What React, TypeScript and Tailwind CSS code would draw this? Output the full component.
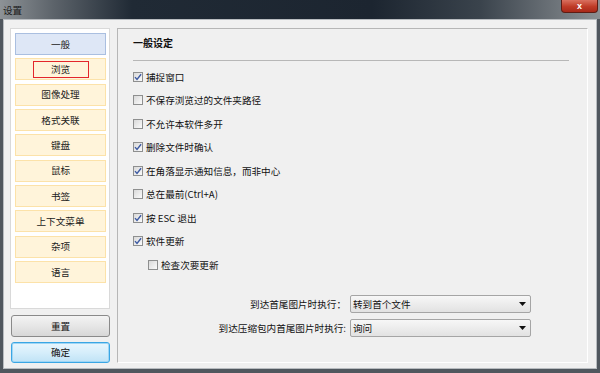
import React from "react"

const categories = ["一般", "浏览", "图像处理", "格式关联", "键盘", "鼠标", "书签", "上下文菜单", "杂项", "语言"]

const options = [
  { label: "捕捉窗口", checked: true },
  { label: "不保存浏览过的文件夹路径", checked: false },
  { label: "不允许本软件多开", checked: false },
  { label: "删除文件时确认", checked: true },
  { label: "在角落显示通知信息，而非中心", checked: true },
  { label: "总在最前(Ctrl+A)", checked: false },
  { label: "按 ESC 退出", checked: true },
  { label: "软件更新", checked: true },
  { label: "检查次要更新", checked: false, indent: true },
]

function CheckBox({ checked }: { checked: boolean }) {
  return (
    <span className="flex h-[10px] w-[10px] shrink-0 items-center justify-center border border-[#8e8f8f] bg-[linear-gradient(135deg,#d9d9d9,#fbfbfb)]">
      {checked && (
        <svg width="8" height="8" viewBox="0 0 8 8">
          <path d="M1 4.1 L3 6.4 L7.1 1.2" fill="none" stroke="#3d5aa3" strokeWidth="1.4" />
        </svg>
      )}
    </span>
  )
}

function Select({ value }: { value: string }) {
  return (
    <div className="flex h-[18px] w-[181px] items-center justify-between rounded-[2px] border border-[#a5a5a5] bg-[linear-gradient(to_bottom,#f7f7f7,#e2e2e2)] pl-[2px] pr-[4px]">
      <span>{value}</span>
      <svg width="7" height="4" viewBox="0 0 7 4">
        <path d="M0 0 H7 L3.5 4 Z" fill="#111" />
      </svg>
    </div>
  )
}

export default function App() {
  return (
    <div className="flex h-[373px] w-[600px] flex-col bg-[#50575e] font-['Noto_Sans_CJK_SC',sans-serif] text-[9.6px] text-[#111]">
      {/* title bar */}
      <div className="flex h-[19px] items-start justify-between bg-[linear-gradient(to_right,#8d9296_0%,#5c636a_9%,#202a35_22%,#1c2530_62%,#3a434c_80%,#8b9094_100%)]">
        <span className="ml-[3px] mt-[4px] leading-[12px] text-[#1c1c1c]">设置</span>
        <div className="mr-[2px] flex h-[13px] w-[37px] items-center justify-center rounded-b-[4px] border border-t-0 border-[#5e1c14] bg-[linear-gradient(to_bottom,#d9705f,#bf3b27_55%,#a8291a)] font-['Liberation_Sans',sans-serif] text-[9px] font-bold leading-[11px] text-white">
          x
        </div>
      </div>

      {/* client */}
      <div className="mx-[3px] mb-[4px] flex flex-1 gap-[7px] border border-[#b8bcc0] bg-[#f0f0f0] pb-[5px] pl-[6px] pr-[8px] pt-[8px]">
        {/* left column */}
        <div className="flex w-[100px] flex-col">
          <div className="flex h-[281px] flex-col gap-[3.33px] border border-[#d9d9d9] bg-white pl-[4px] pr-[3px] pt-[4px]">
            {categories.map((c, i) => (
              <div
                key={c}
                className={
                  i === 0
                    ? "flex h-[22px] items-center justify-center border border-[#aabfe0] bg-[#dee7f6] text-[#222]"
                    : "flex h-[22px] items-center justify-center border border-[#fce2a9] bg-[#fff4da] text-[#222]"
                }
              >
                {i === 1 ? (
                  <span className="flex h-[17px] w-[56px] items-center justify-center border-[1.5px] border-[#e3262b]">{c}</span>
                ) : (
                  c
                )}
              </div>
            ))}
          </div>
          <button className="ml-[1px] mt-[6px] flex h-[22px] items-center justify-center rounded-[3px] border border-[#8a8a8a] bg-[linear-gradient(to_bottom,#f4f4f4,#e6e6e6_50%,#d7d7d7)] text-[#111]">
            重置
          </button>
          <button className="ml-[1px] mt-[5px] flex h-[21px] items-center justify-center rounded-[3px] border border-[#3aa6e4] bg-[linear-gradient(to_bottom,#e9f6fd,#d6eefb_50%,#c0e3f6)] text-[#111] shadow-[inset_0_0_0_1px_#9fd6f5]">
            确定
          </button>
        </div>

        {/* right panel */}
        <div className="flex flex-1 flex-col border border-b-white border-l-[#b6b6b6] border-r-white border-t-[#b6b6b6] pl-[15px] pr-[18px] pt-[7px]">
          <div className="text-[10px] font-bold leading-[14px]">一般设定</div>
          <div className="mt-[10px] h-px bg-[#b7b7b7]" />
          <div className="mt-[4px] flex flex-col">
            {options.map((o) => (
              <div key={o.label} className={o.indent ? "flex h-[23.5px] items-center gap-[3px] pl-[15px]" : "flex h-[23.5px] items-center gap-[3px]"}>
                <CheckBox checked={o.checked} />
                <span className="leading-[12px]">{o.label}</span>
              </div>
            ))}
          </div>
          <div className="mt-[18.5px] flex flex-col gap-[6px]">
            <div className="flex items-center gap-[4px]">
              <span className="w-[213px] text-right">到达首尾图片时执行：</span>
              <Select value="转到首个文件" />
            </div>
            <div className="flex items-center gap-[4px]">
              <span className="w-[213px] text-right">到达压缩包内首尾图片时执行:</span>
              <Select value="询问" />
            </div>
          </div>
        </div>
      </div>
    </div>
  )
}
